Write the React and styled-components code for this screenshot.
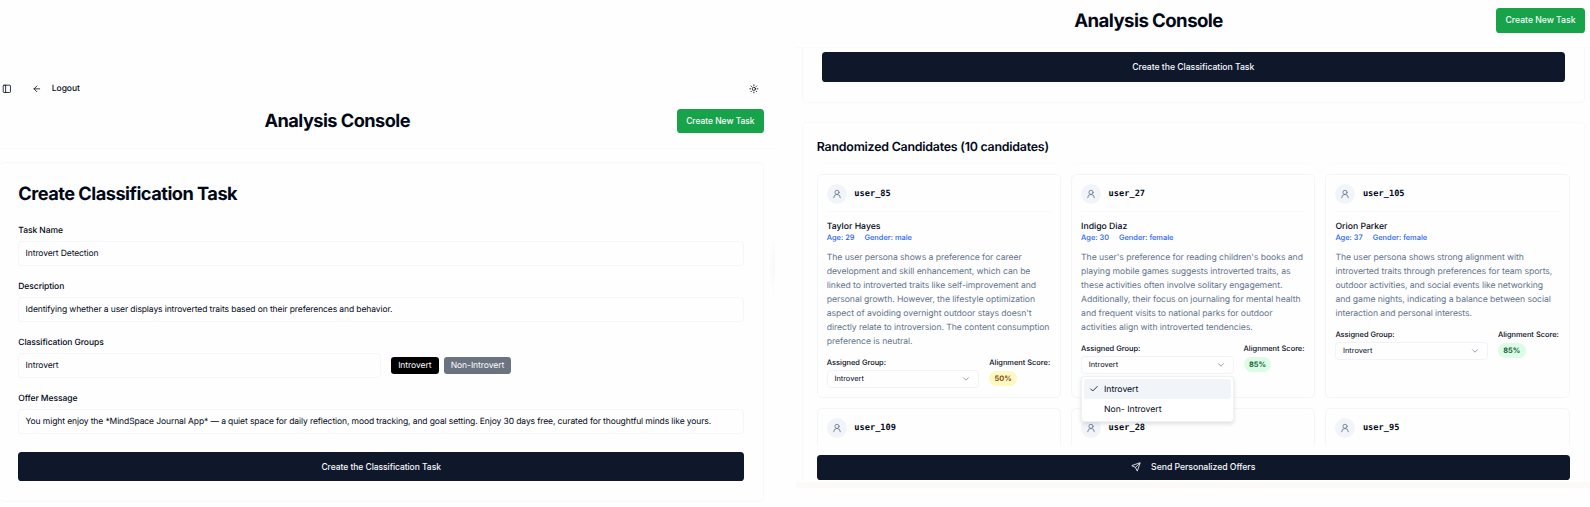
import React from 'react';
import styled, { createGlobalStyle } from 'styled-components';
import { ArrowLeft, Check, ChevronDown, PanelLeft, Send, Sun, UserRound } from 'lucide-react';

const GlobalStyle = createGlobalStyle`
  *, *::before, *::after { box-sizing: border-box; }
  body {
    margin: 0;
    background: #fefefe;
    color: #020817;
    font-family: Inter, "Liberation Sans", sans-serif;
    text-rendering: geometricPrecision;
    -webkit-font-smoothing: antialiased;
    overflow: hidden;
  }
  h1, h2, p { margin: 0; }
  button { font-family: inherit; border: 0; padding: 0; }
`;

const Screens = styled.div`
  display: grid;
  grid-template-columns: 775px 794px;
  justify-content: space-between;
  width: 1590px;
  height: 507px;
  overflow: hidden;
`;

const Pane = styled.section`
  display: flex;
  flex-direction: column;
  min-width: 0;
  height: ${(p) => p.$height}px;
  padding-top: ${(p) => p.$top || 0}px;
  overflow: hidden;
`;

const TopBar = styled.nav`
  display: flex;
  align-items: center;
  height: 22px;
  padding: 0 16px 0 2px;
  font-size: 8.5px;
  font-weight: 500;
  letter-spacing: -0.07px;
  svg { display: block; }
`;

const BackLink = styled.div`
  display: flex;
  align-items: center;
  gap: 9.7px;
  margin-left: 20.8px;
  margin-right: auto;
`;

const Header = styled.header`
  display: flex;
  align-items: center;
  height: ${(p) => p.$height}px;
  padding: 0 ${(p) => p.$right}px ${(p) => p.$bottom}px ${(p) => p.$left}px;
  border-bottom: 1px solid #fafafb;
  flex: none;
`;

const Title = styled.h1`
  flex: 1;
  padding: ${(p) => p.$drop}px ${(p) => p.$shift || 0}px 0 0;
  text-align: center;
  font-size: ${(p) => p.$size}px;
  line-height: 1.2;
  font-weight: 700;
  letter-spacing: -0.03em;
`;

const GreenButton = styled.button`
  width: ${(p) => p.$width}px;
  height: ${(p) => p.$height}px;
  border-radius: 3.6px;
  background: #16a34a;
  color: #f8fafc;
  font-size: ${(p) => p.$font}px;
  font-weight: 500;
  letter-spacing: -0.04px;
`;

const FormCard = styled.div`
  margin: 13px 11px 0 -1px;
  padding: 20px 19px 0 18.3px;
  height: 340px;
  border: 1px solid #f7f8fa;
  border-radius: 5px;
`;

const FormTitle = styled.h2`
  font-size: 18.2px;
  line-height: 22px;
  font-weight: 700;
  letter-spacing: -0.028em;
  margin-bottom: 21px;
`;

const Field = styled.div`
  height: 56px;
`;

const FieldLabel = styled.div`
  height: 15px;
  padding-top: 0.3px;
  font-size: 8.5px;
  line-height: 10px;
  font-weight: 500;
  letter-spacing: -0.07px;
`;

const Input = styled.div`
  display: flex;
  align-items: center;
  width: ${(p) => p.$width || '100%'};
  height: 25px;
  padding: 0 6.3px;
  border: 1px solid #f4f6f8;
  border-radius: 3.6px;
  font-size: 8.5px;
  letter-spacing: -0.1px;
  white-space: nowrap;
`;

const GroupRow = styled.div`
  display: flex;
  align-items: center;
`;

const Tag = styled.span`
  display: flex;
  align-items: center;
  justify-content: center;
  width: ${(p) => p.$width}px;
  height: 17px;
  margin-left: ${(p) => p.$gap}px;
  border-radius: 3.2px;
  background: ${(p) => p.$color};
  color: #fff;
  font-size: 8.5px;
  letter-spacing: -0.05px;
`;

const DarkButton = styled.button`
  display: flex;
  align-items: center;
  justify-content: center;
  gap: 10px;
  width: 100%;
  height: ${(p) => p.$height}px;
  margin-top: ${(p) => p.$offset || 0}px;
  border-radius: 3.6px;
  background: #0f172a;
  color: #f8fafc;
  font-size: ${(p) => p.$font}px;
  font-weight: 500;
  letter-spacing: -0.05px;
  flex: none;
`;

const PaneEdge = styled.div`
  position: absolute;
  left: 769px;
  top: 235px;
  width: 6px;
  height: 62px;
  background: radial-gradient(ellipse at right center, #f7f7f7, #fefefe 75%);
`;

const TaskCard = styled.div`
  flex: none;
  height: 55px;
  margin: 0 5px 0 5.5px;
  padding: 4px 19px 0 19px;
  border: 1px solid #f7f8fa;
  border-top: 0;
  border-radius: 0 0 5px 5px;
`;

const CandidatePanel = styled.div`
  flex: none;
  display: flex;
  flex-direction: column;
  height: 360px;
  margin: 19px 5px 0 5.5px;
  padding: 15.7px 14.3px 0;
  border: 1px solid #f8f9fb;
  border-bottom: 0;
  border-radius: 5px 5px 0 0;
`;

const PanelTitle = styled.h2`
  font-size: 12.4px;
  line-height: 16px;
  font-weight: 600;
  letter-spacing: -0.23px;
`;

const HiddenRow = styled.div`
  display: grid;
  grid-template-columns: repeat(3, 235px);
  gap: 19.5px;
  padding-left: 4.5px;
  margin-top: 8.5px;
  height: 10.8px;
  span { height: 1px; background: #fafbfc; }
`;

const CardGrid = styled.div`
  display: grid;
  grid-template-columns: repeat(3, 244.3px);
  justify-content: space-between;
  grid-template-rows: 224.5px 60px;
  row-gap: 9.5px;
  height: 271px;
  overflow: hidden;
  margin-bottom: 9.7px;
`;

const Card = styled.article`
  padding: 9.5px 9px;
  border: 1px solid #f3f5f8;
  border-radius: 5px;
`;

const CardHead = styled.div`
  display: flex;
  align-items: center;
  gap: 7.5px;
  height: 28px;
  padding-bottom: 8px;
  border-bottom: ${(p) => (p.$line ? '1px solid #f8f9fb' : '0')};
  font-family: "DejaVu Sans Mono", monospace;
  font-size: 8.66px;
  font-weight: 700;
`;

const Avatar = styled.span`
  display: grid;
  place-items: center;
  width: 20px;
  height: 20px;
  border-radius: 50%;
  background: #f1f5f9;
  color: #64748b;
  svg { display: block; }
`;

const PersonName = styled.div`
  margin-top: 8.5px;
  font-size: 8.66px;
  line-height: 12px;
  font-weight: 500;
`;

const Facts = styled.div`
  display: flex;
  gap: 10px;
  color: #2563eb;
  font-size: 7.43px;
  line-height: 10px;
  font-weight: 500;
`;

const Summary = styled.p`
  margin: 7.7px 0 8.9px;
  color: #64748b;
  font-size: 8.66px;
  line-height: 14.13px;
  letter-spacing: -0.065px;
  white-space: nowrap;
`;

const CardFoot = styled.div`
  display: grid;
  grid-template-columns: 152.5px 1fr;
  column-gap: 10px;
  font-size: 7.43px;
`;

const FootLabel = styled.div`
  height: 11.7px;
  line-height: 10px;
  font-weight: 500;
  white-space: nowrap;
`;

const SelectWrap = styled.div`
  position: relative;
`;

const Select = styled.div`
  display: flex;
  align-items: center;
  justify-content: space-between;
  height: 17.7px;
  padding: 0 7px 0 6.6px;
  border: 1px solid #f1f4f7;
  border-radius: 3.6px;
  svg { color: #858b97; }
`;

const Menu = styled.div`
  position: absolute;
  z-index: 2;
  left: 0;
  top: 20.3px;
  width: 153px;
  padding: 2.2px;
  border: 1px solid #eef1f5;
  border-radius: 3.6px;
  background: #fff;
  box-shadow: 0 2px 4px rgba(0, 0, 0, 0.12);
`;

const MenuItem = styled.div`
  display: grid;
  grid-template-columns: 19.7px 1fr;
  align-items: center;
  height: 19.8px;
  font-size: 8.66px;
  border-radius: 2px;
  background: ${(p) => (p.$active ? '#f1f5f9' : 'transparent')};
  svg { margin-left: 4.5px; }
  span { grid-column: 2; padding-top: 1px; }
`;

const Score = styled.span`
  display: flex;
  align-items: center;
  justify-content: center;
  width: 27.7px;
  height: 15px;
  margin-top: 1.2px;
  border-radius: 8px;
  font-weight: 700;
  background: ${(p) => (p.$high ? '#dcfce7' : '#fef9c3')};
  color: ${(p) => (p.$high ? '#166534' : '#854d0e')};
`;

const BottomStrip = styled.div`
  flex: none;
  height: 6px;
  background: #fcfaf6;
`;

const candidates = [
  {
    id: 'user_85', name: 'Taylor Hayes', age: 29, gender: 'male', score: 50,
    lines: ['The user persona shows a preference for career', 'development and skill enhancement, which can be',
      'linked to introverted traits like self-improvement and', 'personal growth. However, the lifestyle optimization',
      "aspect of avoiding overnight outdoor stays doesn't", 'directly relate to introversion. The content consumption',
      'preference is neutral.'],
  },
  {
    id: 'user_27', name: 'Indigo Diaz', age: 30, gender: 'female', score: 85, open: true,
    lines: ["The user's preference for reading children's books and", 'playing mobile games suggests introverted traits, as',
      'these activities often involve solitary engagement.', 'Additionally, their focus on journaling for mental health',
      'and frequent visits to national parks for outdoor', 'activities align with introverted tendencies.'],
  },
  {
    id: 'user_105', name: 'Orion Parker', age: 37, gender: 'female', score: 85,
    lines: ['The user persona shows strong alignment with', 'introverted traits through preferences for team sports,',
      'outdoor activities, and social events like networking', 'and game nights, indicating a balance between social',
      'interaction and personal interests.'],
  },
];

function UserHead({ id, line }) {
  return (
    <CardHead $line={line}>
      <Avatar><UserRound size={10} strokeWidth={2} /></Avatar>
      {id}
    </CardHead>
  );
}

function CandidateCard({ person }) {
  return (
    <Card>
      <UserHead id={person.id} line />
      <PersonName>{person.name}</PersonName>
      <Facts><span>Age: {person.age}</span><span>Gender: {person.gender}</span></Facts>
      <Summary>
        {person.lines.map((line) => <React.Fragment key={line}>{line}<br /></React.Fragment>)}
      </Summary>
      <CardFoot>
        <FootLabel>Assigned Group:</FootLabel>
        <FootLabel>Alignment Score:</FootLabel>
        <SelectWrap>
          <Select>Introvert<ChevronDown size={9.9} strokeWidth={2} /></Select>
          {person.open && (
            <Menu>
              <MenuItem $active><Check size={9.9} strokeWidth={2} /><span>Introvert</span></MenuItem>
              <MenuItem><span>Non- Introvert</span></MenuItem>
            </Menu>
          )}
        </SelectWrap>
        <div><Score $high={person.score > 70}>{person.score}%</Score></div>
      </CardFoot>
    </Card>
  );
}

export default function App() {
  return (
    <>
      <GlobalStyle />
      <Screens>
        <Pane $height={507} $top={78}>
          <TopBar>
            <PanelLeft size={9.7} />
            <BackLink><ArrowLeft size={9.7} /><span>Logout</span></BackLink>
            <Sun size={9.7} />
          </TopBar>
          <Header $height={49} $left={0} $right={11.3} $bottom={6.4}>
            <Title $size={18.2} $drop={2.6} $shift={2.5}>Analysis Console</Title>
            <GreenButton $width={86.7} $height={24.3} $font={8.5}>Create New Task</GreenButton>
          </Header>
          <FormCard>
            <FormTitle>Create Classification Task</FormTitle>
            <Field><FieldLabel>Task Name</FieldLabel><Input>Introvert Detection</Input></Field>
            <Field>
              <FieldLabel>Description</FieldLabel>
              <Input>Identifying whether a user displays introverted traits based on their preferences and behavior.</Input>
            </Field>
            <Field>
              <FieldLabel>Classification Groups</FieldLabel>
              <GroupRow>
                <Input $width="362.5px">Introvert</Input>
                <Tag $width={48} $gap={10} $color="#000">Introvert</Tag>
                <Tag $width={67.7} $gap={4.8} $color="#6b7280">Non-Introvert</Tag>
              </GroupRow>
            </Field>
            <Field>
              <FieldLabel>Offer Message</FieldLabel>
              <Input>You might enjoy the *MindSpace Journal App* — a quiet space for daily reflection, mood tracking, and goal setting. Enjoy 30 days free, curated for thoughtful minds like yours.</Input>
            </Field>
            <DarkButton $height={29.3} $font={8.5} $offset={2.2}>Create the Classification Task</DarkButton>
          </FormCard>
          <PaneEdge />
        </Pane>
        <Pane $height={488}>
          <Header $height={48} $left={5} $right={5} $bottom={6.8}>
            <Title $size={18.6} $drop={1.7}>Analysis Console</Title>
            <GreenButton $width={89} $height={25} $font={8.7}>Create New Task</GreenButton>
          </Header>
          <TaskCard><DarkButton $height={29.8} $font={8.7}>Create the Classification Task</DarkButton></TaskCard>
          <CandidatePanel>
            <PanelTitle>Randomized Candidates (10 candidates)</PanelTitle>
            <HiddenRow><span /><span /><span /></HiddenRow>
            <CardGrid>
              {candidates.map((person) => <CandidateCard key={person.id} person={person} />)}
              {['user_109', 'user_28', 'user_95'].map((id) => <Card key={id}><UserHead id={id} /></Card>)}
            </CardGrid>
            <DarkButton $height={25} $font={8.7}><Send size={9.9} />Send Personalized Offers</DarkButton>
          </CandidatePanel>
          <BottomStrip />
        </Pane>
      </Screens>
    </>
  );
}
